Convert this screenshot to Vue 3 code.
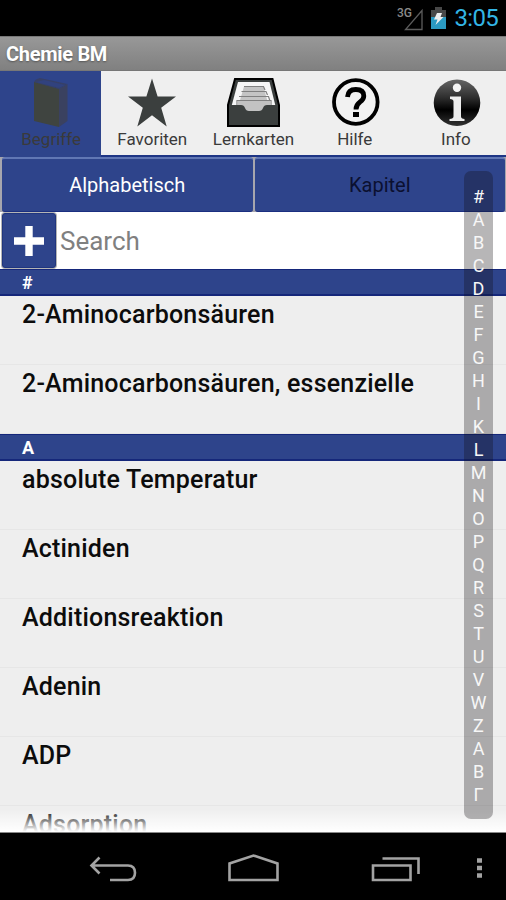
<template>
  <div class="screen">
    <div class="status-bar">
      <svg class="signal" width="28" height="26" viewBox="0 0 28 26">
        <text x="0" y="11" class="network">3G</text>
        <path d="M25 4.500V23.500H8.500Z" fill="none" stroke="#5c5c5c" stroke-width="1.3" />
      </svg>
      <svg class="battery" width="15" height="23" viewBox="0 0 15 23">
        <path d="M4 0h7v3h4v7H0V3h4z" fill="#484848" />
        <path d="M0 10h15v12H0z" fill="#2b9ac2" />
        <path d="M6 6h5l-1.500 4h3l-8 8 2-5.500H3z" fill="#eee" />
      </svg>
      <span class="clock">3:05</span>
    </div>

    <div class="title-bar">Chemie BM</div>

    <div class="tabs">
      <div
        v-for="tab in tabs"
        :key="tab.id"
        :class="['tab', { active: currentTab === tab.id }]"
        @click="currentTab = tab.id"
      >
        <svg class="tab-icon" width="56" height="52" viewBox="0 0 56 52">
          <g v-if="tab.id === 'terms'">
            <path d="M11 5Q12 2 17 1L44.500 7L36 12Z" fill="#364068" />
            <path d="M36 12L44.500 7V44L36 50Z" fill="#3a4160" />
            <path d="M11 5L36 12V50L11 44Z" fill="#3f4440" />
            <path d="M13 5L21 3L42 8L36 11Z" fill="#31427e" />
          </g>
          <path
            v-else-if="tab.id === 'favorites'"
            d="M28 1.500L33.600 19.500H52L37.200 30.700L42.700 49.500L28 38.200L13.300 49.500L18.800 30.700L4 19.500H22.400Z"
            fill="#3b3f3e"
          />
          <g v-else-if="tab.id === 'cards'">
            <path d="M9 2H46.500L53 28V49H2V28Z" fill="#3b3f3e" stroke="#000" stroke-width="2" />
            <path d="M12 5H43.500L50 31H5Z" fill="#f6f6f6" />
            <path d="M18 9.500H37.500L43 30H12Z" fill="#c4c4c4" />
            <path
              d="M18 9.500H37.500L39 13M15.500 14.500H40L41.500 18M13 19.500H42.500L44 24M11 31V23.500H45V31"
              fill="none"
              stroke="#808080"
              stroke-width="1.200"
            />
            <path d="M11.500 24H44.500V36H11.500Z" fill="#c2c2c2" />
            <path d="M3 28H15Q18 28 19 31Q20 34 23 34H33Q36 34 37 31Q38 28 41 28H52V48H3Z" fill="#3b3f3e" />
          </g>
          <g v-else-if="tab.id === 'help'">
            <circle cx="28.800" cy="25" r="21.800" fill="#f2f2f2" stroke="#000" stroke-width="3.800" />
            <path
              d="M20.500 20Q21 12.500 28.800 12.500Q36.800 12.500 36.800 19Q36.800 22.500 33 25Q29 27.800 29 32.500"
              fill="none"
              stroke="#000"
              stroke-width="4.800"
            />
            <path d="M26 35h6v5h-6z" fill="#000" />
          </g>
          <g v-else>
            <defs>
              <linearGradient id="infoFill" x1="0" y1="0" x2="0" y2="1">
                <stop offset="0" stop-color="#666" />
                <stop offset="0.4" stop-color="#2c2c2c" />
                <stop offset="0.65" stop-color="#000" />
                <stop offset="1" stop-color="#333" />
              </linearGradient>
            </defs>
            <circle cx="29" cy="25.800" r="23.300" fill="url(#infoFill)" />
            <circle cx="29" cy="10.800" r="4.200" fill="#f4f4f4" />
            <path d="M22 19.500H33V39.500Q33 41.500 36.500 42V44H21.500V42Q25.500 41.500 25.500 39.500V24.500Q25.500 22 22 22Z" fill="#eee" />
          </g>
        </svg>
        <span class="tab-label">{{ tab.label }}</span>
      </div>
    </div>

    <div class="content">
      <div class="segments">
        <button :class="['segment', { selected: mode === 'alpha' }]" @click="mode = 'alpha'">Alphabetisch</button>
        <button :class="['segment', { selected: mode === 'chapter' }]" @click="mode = 'chapter'">Kapitel</button>
      </div>

      <div class="search-row">
        <button class="add-button">
          <svg width="30" height="30" viewBox="0 0 30 30">
            <path d="M11.300 0h7.400v11.300H30v7.400H18.700V30h-7.400V18.700H0v-7.400h11.300z" fill="#fff" />
          </svg>
        </button>
        <input v-model="query" class="search-input" type="text" placeholder="Search" />
      </div>

      <div class="term-list">
        <template v-for="section in sections" :key="section.letter">
          <div class="section-header">{{ section.letter }}</div>
          <div v-for="term in section.terms" :key="term" class="term">
            <span>{{ term }}</span>
          </div>
        </template>
      </div>
      <div class="fade"></div>

      <div class="index-bar">
        <span v-for="(letter, i) in indexLetters" :key="i" class="index-letter">{{ letter }}</span>
      </div>
    </div>

    <div class="nav-bar">
      <svg width="506" height="67" viewBox="0 0 506 67" fill="none" stroke="#a3a3a3" stroke-width="2.600">
        <path d="M99.500 24.500L91.500 32.500L99.500 40.500M92 32.500H128Q135 32.500 135 39.800Q135 47 128 47H110" />
        <path d="M229.500 47V30.500L253.500 22.500L277.500 30.500V47Z" />
        <path d="M373 32.500H410.500V47H373Z M382.500 25.500H418.500V41" />
        <path d="M477 27.500H482M477 35H482M477 42.500H482" stroke-width="4.600" />
      </svg>
    </div>
  </div>
</template>

<script setup>
import { ref } from 'vue';

const tabs = [
  { id: 'terms', label: 'Begriffe' },
  { id: 'favorites', label: 'Favoriten' },
  { id: 'cards', label: 'Lernkarten' },
  { id: 'help', label: 'Hilfe' },
  { id: 'info', label: 'Info' }
];

const currentTab = ref('terms');
const mode = ref('alpha');
const query = ref('');

const sections = [
  { letter: '#', terms: ['2-Aminocarbonsäuren', '2-Aminocarbonsäuren, essenzielle'] },
  {
    letter: 'A',
    terms: ['absolute Temperatur', 'Actiniden', 'Additionsreaktion', 'Adenin', 'ADP', 'Adsorption']
  }
];

const indexLetters = '#ABCDEFGHIKLMNOPQRSTUVWZΑΒΓ'.split('');
</script>

<style>
body {
  background: #000;
}
</style>

<style scoped>
.screen {
  display: flex;
  flex-direction: column;
  width: 506px;
  height: 900px;
  overflow: hidden;
  background: #000;
  font-family: Roboto, "Liberation Sans", sans-serif;
}

.screen * {
  box-sizing: border-box;
}

.status-bar {
  flex: none;
  display: flex;
  align-items: center;
  justify-content: flex-end;
  height: 36px;
  padding-right: 8px;
}

.network {
  font-size: 12px;
  font-weight: 500;
  fill: #8a8a8a;
}

.signal {
  margin-top: 2px;
}

.battery {
  margin: 1px 9px 0 6px;
}

.clock {
  color: #33b5e5;
  font-size: 24px;
  line-height: 38px;
  letter-spacing: -0.7px;
}

.title-bar {
  flex: none;
  height: 35px;
  padding-left: 6px;
  border-top: 1px solid #777;
  border-bottom: 1px solid #777;
  background: linear-gradient(#989898, #808080);
  color: #fff;
  font-size: 20px;
  font-weight: 700;
  line-height: 34px;
  letter-spacing: -0.3px;
  text-shadow: 0 1px 2px #555;
}

.tabs {
  flex: none;
  display: flex;
  height: 86px;
  background: #efefef;
  border-bottom: 2px solid #1e3585;
}

.tab {
  flex: 1;
  display: flex;
  flex-direction: column;
  align-items: center;
  padding: 6px 0 0 1px;
  color: #3a3a3a;
}

.tab.active {
  background: #2e448b;
  box-shadow: 0 2px #2e448b;
}

.tab-label {
  font-size: 17px;
  line-height: 20px;
}

.content {
  position: relative;
  flex: none;
  display: flex;
  flex-direction: column;
  height: 676px;
  background: #fff;
  overflow: hidden;
}

.segments {
  flex: none;
  display: flex;
  gap: 2px;
  height: 55px;
  padding: 0 1px 0 2px;
  background: #a6a6ae;
}

.segment {
  flex: 1;
  padding: 0;
  border: 0;
  border-top: 2px solid #6177b4;
  border-bottom: 1px solid #1b2f80;
  border-radius: 3px;
  background: #2e448b;
  color: #0b1030;
  font-family: inherit;
  font-size: 20px;
}

.segment.selected {
  color: #fff;
}

.search-row {
  flex: none;
  display: flex;
  height: 57px;
  padding: 1px 0 0 2px;
}

.add-button {
  display: flex;
  align-items: center;
  justify-content: center;
  width: 54px;
  height: 55px;
  padding: 0;
  border: 1px solid #20367f;
  border-radius: 3px;
  background: #2e448b;
  box-shadow: 0 0 0 1px #b5b5b5;
}

.search-input {
  flex: 1;
  min-width: 0;
  height: 55px;
  padding: 0 4px;
  border: 0;
  outline: 0;
  background: transparent;
  color: #222;
  font-family: inherit;
  font-size: 26px;
}

.search-input::placeholder {
  color: #808080;
}

.term-list {
  flex: none;
  background: #eee;
}

.section-header {
  height: 27px;
  padding-left: 22px;
  border-top: 1px solid #15277a;
  border-bottom: 2px solid #15277a;
  background: #2e448b;
  color: #fff;
  font-size: 18px;
  font-weight: 700;
  line-height: 26px;
}

.term {
  height: 69px;
  padding: 4px 22px 0;
  border-bottom: 1px solid #e6e6e6;
  color: #0c0c0c;
  font-size: 25px;
  font-weight: 500;
  line-height: 30px;
  letter-spacing: 0.2px;
  white-space: nowrap;
}

.fade {
  position: absolute;
  right: 0;
  bottom: 0;
  left: 0;
  height: 24px;
  border-bottom: 1px solid #888;
  background: linear-gradient(rgba(255, 255, 255, 0), #fff);
}

.index-bar {
  position: absolute;
  top: 14px;
  right: 13px;
  display: flex;
  flex-direction: column;
  align-items: center;
  width: 29px;
  height: 648px;
  padding: 14px 0;
  border-radius: 7px;
  background: rgba(18, 14, 18, 0.3);
}

.index-letter {
  flex: 1;
  color: #f7f7f7;
  font-size: 18px;
  line-height: 23px;
}

.nav-bar {
  flex: none;
  height: 67px;
}
</style>
